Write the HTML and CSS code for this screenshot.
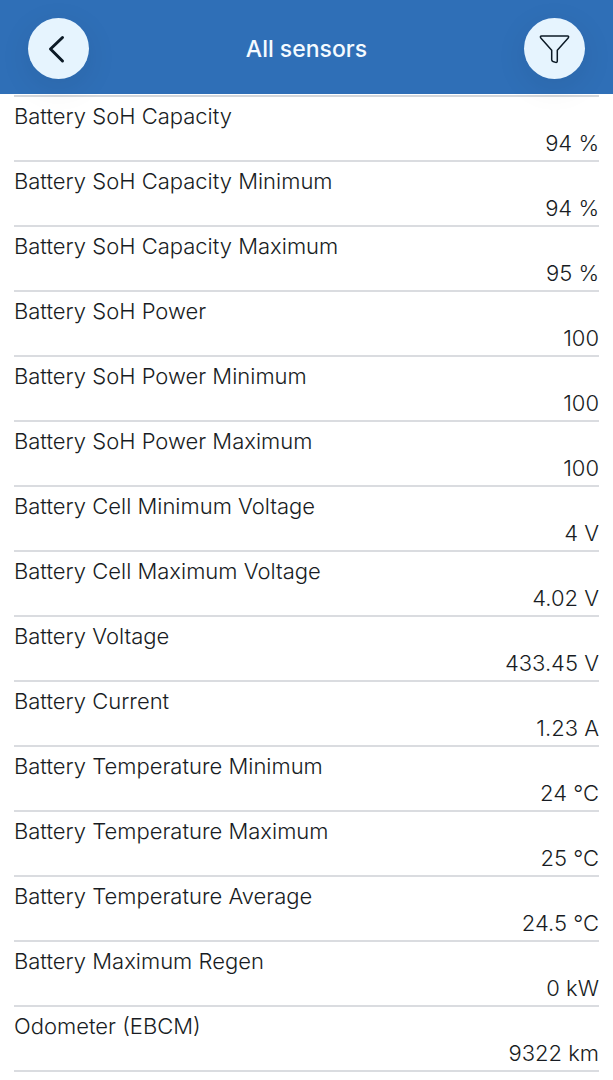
FILE: index.html
```html
<!DOCTYPE html>
<html lang="en">
<head>
  <meta charset="UTF-8">
  <meta name="viewport" content="width=device-width, initial-scale=1.0">
  <title>All sensors</title>
  <link rel="stylesheet" href="styles.css">
</head>
<body>
  <header class="topbar">
    <button class="round-btn" type="button" aria-label="Back">
      <svg width="33" height="33" viewBox="0 0 33 33" fill="none" stroke="#0c1a26" stroke-width="3" stroke-linecap="round" stroke-linejoin="round">
        <path d="M20.500 5.500L8.500 17L20.500 29"/>
      </svg>
    </button>
    <h1>All sensors</h1>
    <button class="round-btn" type="button" aria-label="Filter">
      <svg width="33" height="33" viewBox="0 0 33 33" fill="none" stroke="#0c1a26" stroke-width="1.500" stroke-linejoin="round">
        <path d="M3.500 4H29.500C30.700 4 31 5 30.200 5.900L19.300 18.300V28.800C19.300 30.200 18.600 30.700 17.600 30.400L15 29.500C14.100 29.100 13.700 28.600 13.700 27.800V18.300L2.800 5.900C2 5 2.400 4 3.500 4Z"/>
      </svg>
    </button>
  </header>

  <main>
    <dl class="sensor-list">
      <div class="sensor"><dt>Battery SoH Capacity</dt><dd>94 %</dd></div>
      <div class="sensor"><dt>Battery SoH Capacity Minimum</dt><dd>94 %</dd></div>
      <div class="sensor"><dt>Battery SoH Capacity Maximum</dt><dd>95 %</dd></div>
      <div class="sensor"><dt>Battery SoH Power</dt><dd>100</dd></div>
      <div class="sensor"><dt>Battery SoH Power Minimum</dt><dd>100</dd></div>
      <div class="sensor"><dt>Battery SoH Power Maximum</dt><dd>100</dd></div>
      <div class="sensor"><dt>Battery Cell Minimum Voltage</dt><dd>4 V</dd></div>
      <div class="sensor"><dt>Battery Cell Maximum Voltage</dt><dd>4.02 V</dd></div>
      <div class="sensor"><dt>Battery Voltage</dt><dd>433.45 V</dd></div>
      <div class="sensor"><dt>Battery Current</dt><dd>1.23 A</dd></div>
      <div class="sensor"><dt>Battery Temperature Minimum</dt><dd>24 °C</dd></div>
      <div class="sensor"><dt>Battery Temperature Maximum</dt><dd>25 °C</dd></div>
      <div class="sensor"><dt>Battery Temperature Average</dt><dd>24.5 °C</dd></div>
      <div class="sensor"><dt>Battery Maximum Regen</dt><dd>0 kW</dd></div>
      <div class="sensor"><dt>Odometer (EBCM)</dt><dd>9322 km</dd></div>
    </dl>
  </main>
</body>
</html>
```
FILE: styles.css
```css
* {
  box-sizing: border-box;
}
body {
  margin: 0;
  font-family: Inter, "Liberation Sans", sans-serif;
  font-size: 22px;
  font-weight: 340;
  line-height: 27px;
  background: #fff;
  color: #181c23;
}
.topbar {
  display: flex;
  align-items: center;
  justify-content: space-between;
  padding: 18px 28px 15px;
  background: #2f6fb7;
}
h1 {
  margin: 0;
  font-size: 23px;
  font-weight: 500;
  line-height: 28px;
  color: #f4faff;
}
.round-btn {
  display: flex;
  align-items: center;
  justify-content: center;
  width: 61px;
  height: 61px;
  padding: 0;
  border: none;
  border-radius: 50%;
  background: #e6f4fe;
  box-shadow: 0 8px 32px rgba(0, 0, 0, 0.08);
  cursor: pointer;
}
.sensor-list {
  margin: 1px 14px 0;
  border-top: 2px solid #d4d7db;
}
.sensor {
  padding: 6px 0 3px;
  border-bottom: 2px solid #dadce0;
}
dd {
  margin: 0;
  text-align: right;
}
```
